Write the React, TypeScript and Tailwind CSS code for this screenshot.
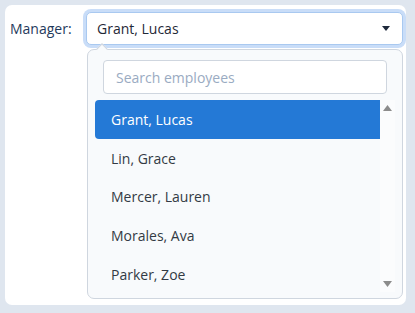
import React from "react";

const names = ["Grant, Lucas", "Lin, Grace", "Mercer, Lauren", "Morales, Ava", "Parker, Zoe"];

export default function App() {
  return (
    <div className="w-[415px] h-[313px] bg-[#dfe6ef] pt-[5px] pl-[5px] overflow-hidden" style={{ fontFamily: '"Open Sans", "Noto Sans", sans-serif' }}>
      <div className="relative w-[401px] h-[300px] bg-white rounded-[7px] flex items-start pl-[5px] pt-[7px]">
        <div className="w-[76px] h-[33px] flex items-center text-[14px] text-[#1f3a5c]">Manager:</div>
        <div className="relative w-[317px]">
          <div className="h-[33px] flex items-center justify-between pl-[10px] pr-[12px] bg-white border border-[#a9c9f0] rounded-[5px] shadow-[0_0_0_3px_#c9ddf8] text-[14px] text-[#1f2937]">
            <span>Grant, Lucas</span>
            <svg width="8" height="5" viewBox="0 0 8 5"><path d="M0 0 L8 0 L4 5 Z" fill="#1e293b" /></svg>
          </div>
          <div className="absolute left-[1px] top-[37px] w-[316px] h-[250px] bg-[#f8fafc] border border-[#cfd6df] rounded-[7px] flex flex-col">
            <div className="absolute left-[10px] top-[-5px] w-[8px] h-[8px] rotate-45 bg-[#f8fafc] border-l border-t border-[#cfd6df]" />
            <div className="mt-[10px] mx-[15px] h-[34px] bg-white border border-[#cfd6df] rounded-[4px] flex items-center pl-[12px] text-[14px] text-[#9aabc2]">
              Search employees
            </div>
            <div className="mt-[6px] ml-[7px] w-[300px] flex">
              <div className="w-[285px] flex flex-col">
                {names.map((n, i) => (
                  <div
                    key={n}
                    className={
                      i === 0
                        ? "h-[38.75px] flex items-center pl-[16px] text-[14px] bg-[#2479d6] text-white rounded-l-[4px]"
                        : "h-[38.75px] flex items-center pl-[16px] text-[14px] text-[#333a44]"
                    }
                  >
                    {n}
                  </div>
                ))}
              </div>
              <div className="w-[15px] h-[192px] bg-[#fbfcfd] flex flex-col items-center justify-between pt-[5px] pb-[5px]">
                <svg width="9" height="6" viewBox="0 0 9 6"><path d="M4.5 0 L9 6 L0 6 Z" fill="#8c8c8c" /></svg>
                <svg width="9" height="6" viewBox="0 0 9 6"><path d="M0 0 L9 0 L4.5 6 Z" fill="#8c8c8c" /></svg>
              </div>
            </div>
          </div>
        </div>
      </div>
    </div>
  );
}
